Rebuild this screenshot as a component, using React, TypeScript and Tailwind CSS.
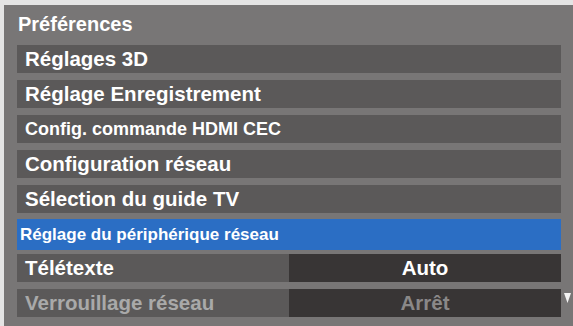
const ITEMS = [
  { label: "Réglages 3D", size: "text-[20.5px]" },
  { label: "Réglage Enregistrement", size: "text-[20.5px]" },
  { label: "Config. commande HDMI CEC", size: "text-[18px]" },
  { label: "Configuration réseau", size: "text-[20.5px]" },
  { label: "Sélection du guide TV", size: "text-[20.5px]" },
];

export default function App() {
  return (
    <div className="w-[573px] h-[326px] bg-[#e4e4e4] pt-[5px] pl-[4px] font-['Liberation_Sans',Arial,sans-serif] font-bold">
      <div className="h-[321px] bg-[#787676] pl-[13px] pt-[7px]">
        <div className="h-[33px] pl-[1px] text-[20px] leading-[24px] text-white">Préférences</div>

        <div className="flex flex-col gap-[7px]">
          {ITEMS.map((item) => (
            <div key={item.label} className="flex">
              <div className={`w-[544px] h-[28px] bg-[#5b5959] pl-[8px] ${item.size} leading-[28px] text-white`}>
                {item.label}
              </div>
            </div>
          ))}

          {/* Selected row */}
          <div className="flex">
            <div className="w-[544px] h-[31px] -mt-[1px] bg-[#2b6ec4] pl-[3px] text-[17px] leading-[31px] text-white">
              Réglage du périphérique réseau
            </div>
          </div>

          <div className="flex -mt-[3px]">
            <div className="w-[544px] h-[28px] flex bg-[#5b5959]">
              <div className="w-[272px] pl-[8px] text-[20.5px] leading-[28px] text-white">Télétexte</div>
              <div className="flex-1 bg-[#383535] text-center text-[20.5px] leading-[28px] text-white">Auto</div>
            </div>
          </div>

          <div className="flex">
            <div className="w-[544px] h-[28px] flex bg-[#5b5959]">
              <div className="w-[272px] pl-[8px] text-[20.5px] leading-[28px] text-[#a9a9a9]">Verrouillage réseau</div>
              <div className="flex-1 bg-[#383535] text-center text-[20.5px] leading-[28px] text-[#8a8888]">Arrêt</div>
            </div>
            <div className="w-[12px] flex justify-center pt-[4px]">
              <svg width="7" height="10" viewBox="0 0 7 10">
                <path d="M0 0H7L3.5 10Z" fill="#f4f4f4" />
              </svg>
            </div>
          </div>
        </div>
      </div>
    </div>
  );
}
